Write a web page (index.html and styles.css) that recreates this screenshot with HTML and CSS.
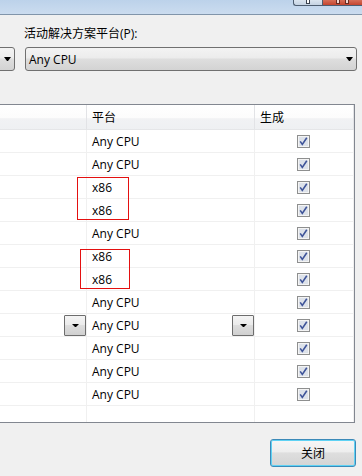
FILE: index.html
```html
<!DOCTYPE html>
<html>
<head>
<meta charset="utf-8">
<link rel="stylesheet" href="styles.css">
</head>
<body>
<div class="titlebar">
  <div class="cap cap-max"><span class="cap-glyph"></span></div>
  <div class="cap cap-close"><span class="x-leg"></span><span class="x-leg"></span></div>
</div>
<div class="label">活动解决方案平台(P):</div>
<div class="combo-row">
  <div class="combo combo-left"><span class="arrow"></span></div>
  <div class="combo combo-main"><span>Any CPU</span><span class="arrow"></span></div>
</div>
<div class="grid">
  <div class="row header"><div class="cell"></div><div class="cell">平台</div><div class="cell">生成</div></div>
  <div class="row"><div class="cell"></div><div class="cell">Any CPU</div><div class="cell chk"><svg class="cb" width="13" height="13" viewBox="0 0 13 13"><rect x="0.5" y="0.5" width="12" height="12" fill="#f4f4f4" stroke="#8e8f8f"/><rect x="2" y="2" width="9" height="9" fill="#dde2ea"/><path d="M3.2 6.4 L5.3 9.4 L9.8 2.8" fill="none" stroke="#3f5499" stroke-width="1.6"/></svg></div></div>
  <div class="row"><div class="cell"></div><div class="cell">Any CPU</div><div class="cell chk"><svg class="cb" width="13" height="13" viewBox="0 0 13 13"><rect x="0.5" y="0.5" width="12" height="12" fill="#f4f4f4" stroke="#8e8f8f"/><rect x="2" y="2" width="9" height="9" fill="#dde2ea"/><path d="M3.2 6.4 L5.3 9.4 L9.8 2.8" fill="none" stroke="#3f5499" stroke-width="1.6"/></svg></div></div>
  <div class="row"><div class="cell"></div><div class="cell">x86</div><div class="cell chk"><svg class="cb" width="13" height="13" viewBox="0 0 13 13"><rect x="0.5" y="0.5" width="12" height="12" fill="#f4f4f4" stroke="#8e8f8f"/><rect x="2" y="2" width="9" height="9" fill="#dde2ea"/><path d="M3.2 6.4 L5.3 9.4 L9.8 2.8" fill="none" stroke="#3f5499" stroke-width="1.6"/></svg></div></div>
  <div class="row"><div class="cell"></div><div class="cell">x86</div><div class="cell chk"><svg class="cb" width="13" height="13" viewBox="0 0 13 13"><rect x="0.5" y="0.5" width="12" height="12" fill="#f4f4f4" stroke="#8e8f8f"/><rect x="2" y="2" width="9" height="9" fill="#dde2ea"/><path d="M3.2 6.4 L5.3 9.4 L9.8 2.8" fill="none" stroke="#3f5499" stroke-width="1.6"/></svg></div></div>
  <div class="row"><div class="cell"></div><div class="cell">Any CPU</div><div class="cell chk"><svg class="cb" width="13" height="13" viewBox="0 0 13 13"><rect x="0.5" y="0.5" width="12" height="12" fill="#f4f4f4" stroke="#8e8f8f"/><rect x="2" y="2" width="9" height="9" fill="#dde2ea"/><path d="M3.2 6.4 L5.3 9.4 L9.8 2.8" fill="none" stroke="#3f5499" stroke-width="1.6"/></svg></div></div>
  <div class="row"><div class="cell"></div><div class="cell">x86</div><div class="cell chk"><svg class="cb" width="13" height="13" viewBox="0 0 13 13"><rect x="0.5" y="0.5" width="12" height="12" fill="#f4f4f4" stroke="#8e8f8f"/><rect x="2" y="2" width="9" height="9" fill="#dde2ea"/><path d="M3.2 6.4 L5.3 9.4 L9.8 2.8" fill="none" stroke="#3f5499" stroke-width="1.6"/></svg></div></div>
  <div class="row"><div class="cell"></div><div class="cell">x86</div><div class="cell chk"><svg class="cb" width="13" height="13" viewBox="0 0 13 13"><rect x="0.5" y="0.5" width="12" height="12" fill="#f4f4f4" stroke="#8e8f8f"/><rect x="2" y="2" width="9" height="9" fill="#dde2ea"/><path d="M3.2 6.4 L5.3 9.4 L9.8 2.8" fill="none" stroke="#3f5499" stroke-width="1.6"/></svg></div></div>
  <div class="row"><div class="cell"></div><div class="cell">Any CPU</div><div class="cell chk"><svg class="cb" width="13" height="13" viewBox="0 0 13 13"><rect x="0.5" y="0.5" width="12" height="12" fill="#f4f4f4" stroke="#8e8f8f"/><rect x="2" y="2" width="9" height="9" fill="#dde2ea"/><path d="M3.2 6.4 L5.3 9.4 L9.8 2.8" fill="none" stroke="#3f5499" stroke-width="1.6"/></svg></div></div>
  <div class="row"><div class="cell"><span class="dd"><span class="dd-arrow"></span></span></div><div class="cell dd-cell">Any CPU<span class="dd"><span class="dd-arrow"></span></span></div><div class="cell chk"><svg class="cb" width="13" height="13" viewBox="0 0 13 13"><rect x="0.5" y="0.5" width="12" height="12" fill="#f4f4f4" stroke="#8e8f8f"/><rect x="2" y="2" width="9" height="9" fill="#dde2ea"/><path d="M3.2 6.4 L5.3 9.4 L9.8 2.8" fill="none" stroke="#3f5499" stroke-width="1.6"/></svg></div></div>
  <div class="row"><div class="cell"></div><div class="cell">Any CPU</div><div class="cell chk"><svg class="cb" width="13" height="13" viewBox="0 0 13 13"><rect x="0.5" y="0.5" width="12" height="12" fill="#f4f4f4" stroke="#8e8f8f"/><rect x="2" y="2" width="9" height="9" fill="#dde2ea"/><path d="M3.2 6.4 L5.3 9.4 L9.8 2.8" fill="none" stroke="#3f5499" stroke-width="1.6"/></svg></div></div>
  <div class="row"><div class="cell"></div><div class="cell">Any CPU</div><div class="cell chk"><svg class="cb" width="13" height="13" viewBox="0 0 13 13"><rect x="0.5" y="0.5" width="12" height="12" fill="#f4f4f4" stroke="#8e8f8f"/><rect x="2" y="2" width="9" height="9" fill="#dde2ea"/><path d="M3.2 6.4 L5.3 9.4 L9.8 2.8" fill="none" stroke="#3f5499" stroke-width="1.6"/></svg></div></div>
  <div class="row"><div class="cell"></div><div class="cell">Any CPU</div><div class="cell chk"><svg class="cb" width="13" height="13" viewBox="0 0 13 13"><rect x="0.5" y="0.5" width="12" height="12" fill="#f4f4f4" stroke="#8e8f8f"/><rect x="2" y="2" width="9" height="9" fill="#dde2ea"/><path d="M3.2 6.4 L5.3 9.4 L9.8 2.8" fill="none" stroke="#3f5499" stroke-width="1.6"/></svg></div></div>
  <div class="row empty"><div class="cell"></div><div class="cell"></div><div class="cell"></div></div>
  <div class="mark mark1"></div>
  <div class="mark mark2"></div>
</div>
<div class="footer"><button class="close-btn">关闭</button></div>
</body>
</html>
```
FILE: styles.css
```css
html, body {
  margin: 0;
  padding: 0;
}
body {
  background: #f0f0f0;
  font-family: "Open Sans", "Noto Sans CJK SC", sans-serif;
  font-size: 12px;
  color: #000;
  width: 362px;
  height: 476px;
  overflow: hidden;
}
.titlebar {
  height: 14px;
  border-bottom: 1px solid #8195aa;
  background: linear-gradient(#bcd2ea, #cbdcef);
  display: flex;
  justify-content: flex-end;
  align-items: flex-start;
}
.cap {
  height: 6px;
  box-sizing: border-box;
  border: 1px solid #4d5d70;
  border-top: none;
  display: flex;
  justify-content: center;
  align-items: flex-start;
}
.cap-max {
  width: 29px;
  border-radius: 0 0 0 3px;
  border-right: none;
  background: linear-gradient(#dae4ef, #c5d3e2);
}
.cap-glyph {
  width: 2px;
  height: 3px;
  border: 1px solid #3b4350;
  border-top: none;
  background: #fff;
}
.cap-close {
  width: 40px;
  border-right: none;
  background: linear-gradient(#d66e58, #c4452f);
  gap: 5px;
}
.x-leg {
  width: 2px;
  height: 3px;
  background: #f4d9d3;
  border: 1px solid #6a2b22;
  border-top: none;
}
.label {
  margin: 11px 0 0 24px;
  line-height: 16px;
}
.combo-row {
  display: flex;
  gap: 10px;
  margin-top: 5px;
}
.combo {
  height: 24px;
  box-sizing: border-box;
  border: 1px solid #707070;
  border-radius: 3px;
  background: linear-gradient(#f3f3f3 0%, #ececec 45%, #dedede 50%, #d3d3d3 100%);
  display: flex;
  align-items: center;
}
.combo-left {
  width: 25px;
  margin-left: -10px;
  justify-content: flex-end;
  padding-right: 3px;
}
.combo-main {
  width: 332px;
  padding: 0 3px;
  justify-content: space-between;
}
.arrow {
  width: 1px;
  height: 0;
  border-left: 3px solid transparent;
  border-right: 3px solid transparent;
  border-top: 4px solid #000;
}
.grid {
  position: relative;
  margin-top: 33px;
  width: 355px;
  box-sizing: border-box;
  border: 1px solid #828790;
  border-left: none;
  background: #fff;
}
.row {
  display: grid;
  grid-template-columns: 87px 168px 99px;
  height: 23px;
}
.cell {
  box-sizing: border-box;
  border-right: 1px solid #f0f0f0;
  border-bottom: 1px solid #f0f0f0;
  padding-left: 5px;
  display: flex;
  align-items: center;
  white-space: nowrap;
}
.header {
  height: 25px;
  background: linear-gradient(#ffffff 0%, #fcfcfc 50%, #f1f2f4 55%, #eef0f2 100%);
}
.header .cell {
  border-right-color: #e2e3e6;
  border-bottom-color: #e5e6e8;
}
.chk {
  justify-content: center;
  padding-left: 0;
}
.cb {
  display: block;
  margin-left: -1px;
}
.empty {
  height: 16px;
}
.empty .cell {
  border-bottom: none;
}
.dd-cell {
  justify-content: space-between;
}
.dd {
  width: 22px;
  height: 21px;
  box-sizing: border-box;
  border: 1px solid #6d6d6d;
  border-radius: 1px;
  background: linear-gradient(#f4f4f4 0%, #ebebeb 45%, #dddddd 50%, #d0d0d0 100%);
  display: flex;
  align-items: center;
  justify-content: center;
  margin-left: auto;
}
.dd-arrow {
  width: 1px;
  height: 0;
  border-left: 3px solid transparent;
  border-right: 3px solid transparent;
  border-top: 3px solid #000;
}
.mark {
  position: absolute;
  box-sizing: border-box;
  border: 1px solid #e41010;
}
.mark1 {
  top: 72px;
  left: 77px;
  width: 52px;
  height: 43px;
}
.mark2 {
  top: 144px;
  left: 80px;
  width: 50px;
  height: 40px;
}
.footer {
  display: flex;
  justify-content: flex-end;
  padding-right: 6px;
  margin-top: 16px;
}
.close-btn {
  width: 86px;
  height: 28px;
  box-sizing: border-box;
  border: 1px solid #3c8ab8;
  border-radius: 3px;
  box-shadow: inset 0 0 0 1px #5fd2f4;
  background: linear-gradient(#f6f6f6 0%, #eeeeee 45%, #dedede 50%, #d4d4d4 100%);
  font-family: "Open Sans", "Noto Sans CJK SC", sans-serif;
  font-size: 12px;
  color: #000;
  padding: 0;
}
```
